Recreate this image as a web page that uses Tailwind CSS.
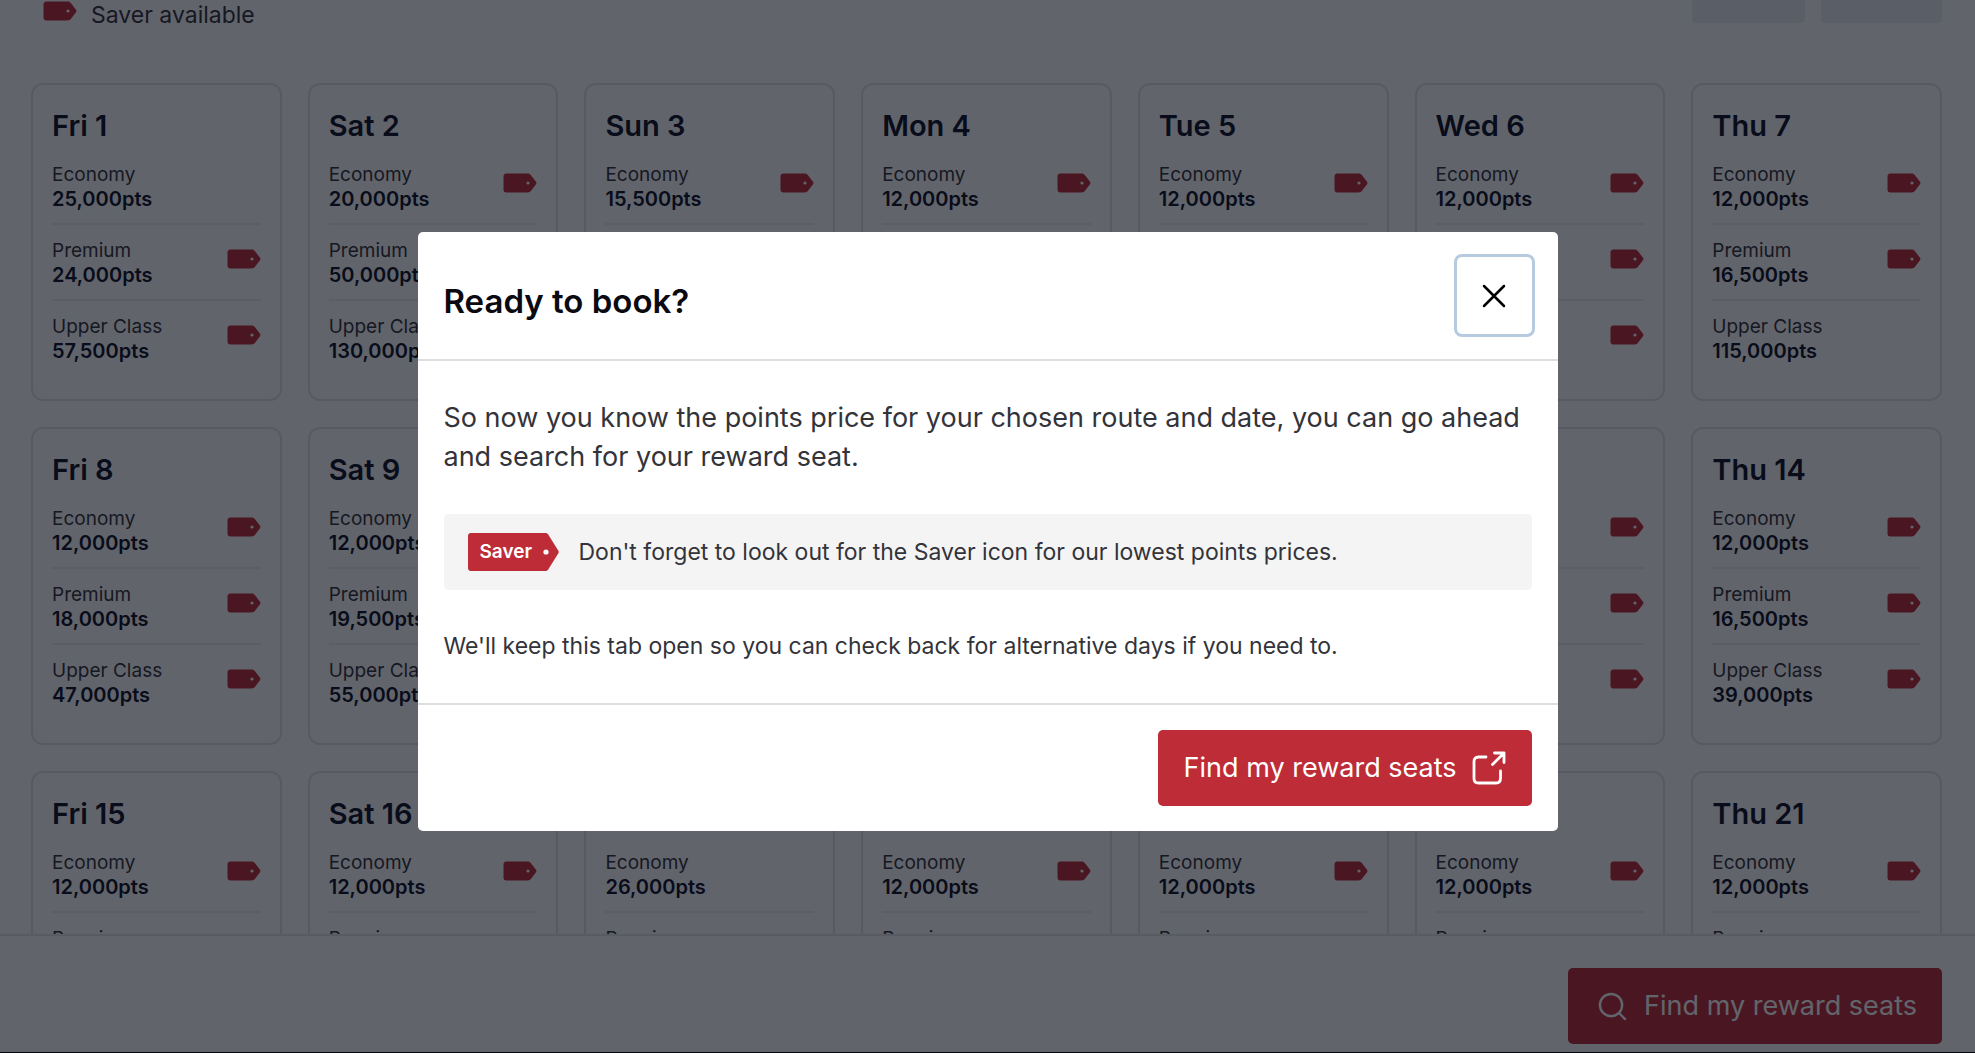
<!DOCTYPE html>
<html lang="en">
<head>
  <meta charset="UTF-8" />
  <meta name="viewport" content="width=device-width, initial-scale=1.0" />
  <title>Reward seat checker</title>
  <script src="https://cdn.jsdelivr.net/npm/@tailwindcss/browser@4"></script>
</head>
<body class="bg-white font-['Inter','Open_Sans',sans-serif] text-[#33333a]">

  <!-- Tag icon, reused for every saver price -->
  <svg class="hidden">
    <symbol id="tag" viewBox="0 0 34 20">
      <path d="M3.500 0.500h21c1.600 0 2.600.5 3.500 1.700l5 6.600c.6.800.6 1.600 0 2.400l-5 6.600c-.9 1.200-1.900 1.700-3.500 1.700h-21c-2 0-3-1-3-3v-13c0-2 1-3 3-3z" fill="#be2c37" />
      <circle cx="25" cy="10" r="1.600" fill="#fff" />
    </symbol>
  </svg>

  <div class="h-screen flex flex-col overflow-hidden border-b border-black">

    <main class="flex-1 min-h-0 overflow-hidden pl-[31px] pr-[33px]">
      <!-- Legend and month buttons -->
      <div class="flex justify-between h-[23px]">
        <div class="flex items-start gap-[14px] pl-3">
          <svg class="w-[34px] h-5 mt-px"><use href="#tag" /></svg>
          <span class="text-[23px] leading-[30px]">Saver available</span>
        </div>
        <div class="flex gap-4">
          <button aria-label="Previous month" class="w-[113px] bg-[#eaf1f5] rounded-b"></button>
          <button aria-label="Next month" class="w-[121px] bg-[#eaf1f5] rounded-b"></button>
        </div>
      </div>

      <!-- Calendar -->
      <div id="calendar" class="grid grid-cols-7 gap-[26px] mt-[60px]"></div>
    </main>

    <!-- Sticky bar -->
    <footer class="flex justify-end border-t-2 border-[#e6e6ea] pt-8 pb-2 pl-[31px] pr-[33px]">
      <button class="flex items-center gap-[17px] h-[76px] pl-[30px] pr-[25px] rounded-[5px] bg-[#be2c37] text-white text-[27px]">
        <svg class="w-[29px] h-[29px]" viewBox="0 0 30 30" fill="none" stroke="currentColor" stroke-width="2.500" stroke-linecap="round">
          <circle cx="13.500" cy="13.500" r="11.500" />
          <path d="M22 22l6 6" />
        </svg>
        <span>Find my reward seats</span>
      </button>
    </footer>
  </div>

  <!-- Modal -->
  <div id="modal" class="fixed inset-0 z-50 flex items-center justify-center pt-[10px] bg-[#060a14]/63">
    <div role="dialog" aria-modal="true" aria-labelledby="modal-title" class="w-full max-w-[1140px] bg-white rounded-[5px]">
      <div class="flex items-center justify-between h-[129px] pl-[26px] pr-[23px] border-b-2 border-[#dededf]">
        <h2 id="modal-title" class="pt-3 text-[33px] font-semibold text-[#0a0a10]">Ready to book?</h2>
        <button id="modal-close" aria-label="Close" class="flex items-center justify-center w-[81px] h-[83px] border-3 border-[#b6cbdf] rounded-lg text-black">
          <svg class="w-6 h-6" viewBox="0 0 24 24" fill="none" stroke="currentColor" stroke-width="2.500" stroke-linecap="round">
            <path d="M2 2l20 20M22 2L2 22" />
          </svg>
        </button>
      </div>

      <div class="px-[26px] pt-[37px] pb-[42px]">
        <p class="text-[27px] leading-[39px]">So now you know the points price for your chosen route and date, you can go ahead and search for your reward seat.</p>
        <div class="flex items-center gap-5 h-[76px] mt-[38px] px-6 bg-[#f4f4f4] rounded-[5px]">
          <div class="relative w-[91px] h-[38px]">
            <svg class="absolute inset-0 w-full h-full" viewBox="0 0 91 38" preserveAspectRatio="none">
              <path d="M3 0h74c1.500 0 2.400.4 3.200 1.600l10 15.800c.7 1.100.7 2.100 0 3.200l-10 15.800c-.8 1.200-1.700 1.600-3.200 1.600H3c-2 0-3-1-3-3V3c0-2 1-3 3-3z" fill="#be2c37" />
              <circle cx="78" cy="19" r="2.600" fill="#fff" />
            </svg>
            <span class="absolute left-3 top-1/2 -translate-y-1/2 text-[19px] font-semibold text-white">Saver</span>
          </div>
          <p class="text-[23px]">Don't forget to look out for the Saver icon for our lowest points prices.</p>
        </div>
        <p class="mt-[41px] text-[23px] leading-[30px]">We'll keep this tab open so you can check back for alternative days if you need to.</p>
      </div>

      <div class="flex justify-end px-[26px] py-[25px] border-t-2 border-[#dededf]">
        <button class="flex items-center gap-[15px] h-[76px] px-[26px] rounded-[5px] bg-[#be2c37] text-white text-[27px]">
          <span>Find my reward seats</span>
          <svg class="w-[34px] h-[34px]" viewBox="0 0 34 34" fill="none" stroke="currentColor" stroke-width="2.800" stroke-linecap="round" stroke-linejoin="round">
            <path d="M14 6H6.500C3.500 6 2 7.500 2 10.500v17C2 30.500 3.500 32 6.500 32h17.500c3 0 4.500-1.500 4.500-4.500V20" />
            <path d="M20.500 13.500L32 2M22.500 2H32v9.500" />
          </svg>
        </button>
      </div>
    </div>
  </div>

  <script>
  // [date, economy, premium, upper class], a "*" marks a saver price
  const days = [
    ["Fri 1", "25,000", "24,000*", "57,500*"],
    ["Sat 2", "20,000*", "50,000", "130,000"],
    ["Sun 3", "15,500*", "35,000*", "75,000*"],
    ["Mon 4", "12,000*", "18,000*", "47,000*"],
    ["Tue 5", "12,000*", "18,000*", "47,000*"],
    ["Wed 6", "12,000*", "18,000*", "47,000*"],
    ["Thu 7", "12,000*", "16,500*", "115,000"],
    ["Fri 8", "12,000*", "18,000*", "47,000*"],
    ["Sat 9", "12,000*", "19,500*", "55,000*"],
    ["Sun 10", "12,000*", "19,500*", "55,000*"],
    ["Mon 11", "12,000*", "18,000*", "47,000*"],
    ["Tue 12", "12,000*", "16,500*", "39,000*"],
    ["Wed 13", "12,000*", "16,500*", "39,000*"],
    ["Thu 14", "12,000*", "16,500*", "39,000*"],
    ["Fri 15", "12,000*", "18,000*", "47,000*"],
    ["Sat 16", "12,000*", "18,000*", "47,000*"],
    ["Sun 17", "26,000", "18,000*", "47,000*"],
    ["Mon 18", "12,000*", "16,500*", "39,000*"],
    ["Tue 19", "12,000*", "16,500*", "39,000*"],
    ["Wed 20", "12,000*", "16,500*", "39,000*"],
    ["Thu 21", "12,000*", "16,500*", "39,000*"]
  ];
  const cabins = ["Economy", "Premium", "Upper Class"];

  document.getElementById("calendar").innerHTML = days.map(([date, ...prices]) => `
    <article class="border-2 border-[#e3e3e8] rounded-xl px-[19px] pt-[23px] pb-[35px]">
      <h3 class="mb-[5px] text-[29px] leading-[36px] font-semibold text-[#0b1226]">${date}</h3>
      ${prices.map((price, i) => `
        <div class="flex items-center justify-between pt-[13px] pb-[11px] border-b-2 border-[#eeeef2] last:border-b-0 last:pb-0">
          <div class="leading-[25px]">
            <p class="text-[19px]">${cabins[i]}</p>
            <p class="text-[20px] font-semibold text-[#0b1226]">${price.replace("*", "")}pts</p>
          </div>
          ${price.endsWith("*") ? '<svg class="w-[34px] h-5 mb-2"><use href="#tag" /></svg>' : ""}
        </div>`).join("")}
    </article>`).join("");

  document.getElementById("modal-close").addEventListener("click", () => {
    document.getElementById("modal").classList.add("hidden");
  });
  </script>

</body>
</html>
